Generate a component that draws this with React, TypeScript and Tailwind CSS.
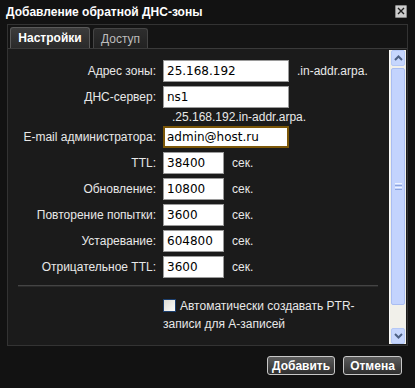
import React from 'react';

const font = { fontFamily: '"Liberation Sans", Arial, sans-serif' };
const inputFont = { fontFamily: '"DejaVu Sans", "Liberation Sans", sans-serif' };

function Field({ label, value, wide, focus, suffix }: { label: string; value: string; wide?: boolean; focus?: boolean; suffix?: string }) {
  return (
    <div className="flex items-center h-[22px]">
      <div className="w-[149px] pr-[1px] text-right text-[12px] text-[#e8e8e8] whitespace-nowrap">{label}</div>
      <div
        style={inputFont}
        className={
          (wide ? 'w-[126px] ' : 'w-[61px] ') +
          'ml-[6px] h-[22px] bg-white flex items-center text-[12px] text-black ' +
          (focus ? 'border-2 border-[#7c5708] pl-[2px]' : 'border border-[#9a9a9a] pl-[3px]')
        }
      >
        {value}
      </div>
      {suffix && <div className="ml-[8px] text-[12px] text-[#e8e8e8]">{suffix}</div>}
    </div>
  );
}

function Scrollbar() {
  return (
    <div className="w-[17px] mt-[1px] mb-[1px] bg-[#f1f0ea] border-l border-[#fdfdfb] flex flex-col">
      {/* up button */}
      <div className="mx-[1px] h-[16px] rounded-[2px] bg-[#c6d6fd] border border-[#b5c8f6] flex items-center justify-center">
        <svg width="9" height="6" viewBox="0 0 9 6">
          <path d="M1 5 L4.5 1.5 L8 5" fill="none" stroke="#4d6185" strokeWidth="2" />
        </svg>
      </div>
      {/* thumb */}
      <div className="mx-[1px] mt-[2px] h-[237px] rounded-[2px] bg-[#c3d3fd] border border-[#a9bdf2] flex items-center justify-center">
        <div className="flex flex-col gap-[1px]">
          <div className="w-[7px] h-[1px] bg-[#eef3ff]" />
          <div className="w-[7px] h-[1px] bg-[#8ca3dc]" />
          <div className="w-[7px] h-[1px] bg-[#eef3ff]" />
          <div className="w-[7px] h-[1px] bg-[#8ca3dc]" />
        </div>
      </div>
      <div className="flex-1" />
      {/* down button */}
      <div className="mx-[1px] h-[16px] rounded-[2px] bg-[#c6d6fd] border border-[#b5c8f6] flex items-center justify-center">
        <svg width="9" height="6" viewBox="0 0 9 6">
          <path d="M1 1 L4.5 4.5 L8 1" fill="none" stroke="#4d6185" strokeWidth="2" />
        </svg>
      </div>
    </div>
  );
}

export default function App() {
  return (
    <div className="w-[415px] h-[388px] bg-[#121212] overflow-hidden" style={font}>
      {/* TITLE BAR */}
      <div className="h-[24px] flex items-center justify-between pl-[6px] pr-[8px]">
        <div className="text-[12px] font-bold text-white">Добавление обратной ДНС-зоны</div>
        <div className="w-[12px] h-[13px] mb-[2px] bg-[#cdcdcd] border border-[#8a8a8a] rounded-[1px] flex items-center justify-center">
          <svg width="8" height="8" viewBox="0 0 8 8">
            <path d="M1 1 L7 7 M7 1 L1 7" stroke="#1e1e1e" strokeWidth="1.4" />
          </svg>
        </div>
      </div>

      {/* TAB PANEL */}
      <div className="mx-[7px] h-[322px] border border-[#333] bg-[#141414] flex flex-col">
        <div className="flex items-end gap-[3px] pl-[2px] pt-[1px] h-[23px]">
          <div className="w-[80px] h-[21px] rounded-t-[3px] border border-b-0 border-[#5a5a5a] bg-gradient-to-b from-[#3c3c3c] to-[#2a2a2a] flex items-center justify-center text-[12px] font-bold text-white">
            Настройки
          </div>
          <div className="w-[55px] h-[20px] rounded-t-[3px] border border-b-0 border-[#454545] bg-gradient-to-b from-[#2e2e2e] to-[#222] flex items-center justify-center text-[12px] text-[#bdbdbd]">
            Доступ
          </div>
        </div>

        {/* CONTENT */}
        <div className="flex-1 flex bg-[#1b1b1b] border-t border-[#3a3a3a]">
          <div className="flex-1 flex flex-col pt-[11px]">
            <div className="flex flex-col gap-[4px]">
              <Field label="Адрес зоны:" value="25.168.192" wide suffix=".in-addr.arpa." />
              <Field label="ДНС-сервер:" value="ns1" wide />
              <div className="h-[10px] leading-[10px] pl-[164px] text-[12px] text-[#e8e8e8] whitespace-nowrap">.25.168.192.in-addr.arpa.</div>
              <Field label="E-mail администратора:" value="admin@host.ru" wide focus />
              <Field label="TTL:" value="38400" suffix="сек." />
              <Field label="Обновление:" value="10800" suffix="сек." />
              <Field label="Повторение попытки:" value="3600" suffix="сек." />
              <Field label="Устаревание:" value="604800" suffix="сек." />
              <Field label="Отрицательное TTL:" value="3600" suffix="сек." />
            </div>

            <div className="ml-[10px] mr-[11px] mt-[7px] h-[2px] bg-[#444] border-b border-[#2a2a2a]" />

            <div className="pl-[155px] pt-[10px] text-[12px] leading-[18px] text-[#e8e8e8]">
              <span className="inline-block align-middle w-[13px] h-[13px] mr-[4px] -mt-[3px] border border-[#1c3f6e] bg-gradient-to-br from-[#dcdcd6] to-[#fbfbf9]" />
              Автоматически создавать PTR-
              <br />
              записи для А-записей
            </div>
          </div>
          <Scrollbar />
          <div className="w-[1px]" />
        </div>
      </div>

      {/* FOOTER */}
      <div className="flex justify-end gap-[8px] pr-[13px] pt-[10px]">
        <button className="w-[68px] h-[19px] rounded-[3px] border border-[#c8c8c8] bg-gradient-to-b from-[#5c5c5c] to-[#2f2f2f] text-[12px] font-bold text-white">
          Добавить
        </button>
        <button className="w-[59px] h-[19px] rounded-[3px] border border-[#c8c8c8] bg-gradient-to-b from-[#5c5c5c] to-[#2f2f2f] text-[12px] font-bold text-white">
          Отмена
        </button>
      </div>
    </div>
  );
}
